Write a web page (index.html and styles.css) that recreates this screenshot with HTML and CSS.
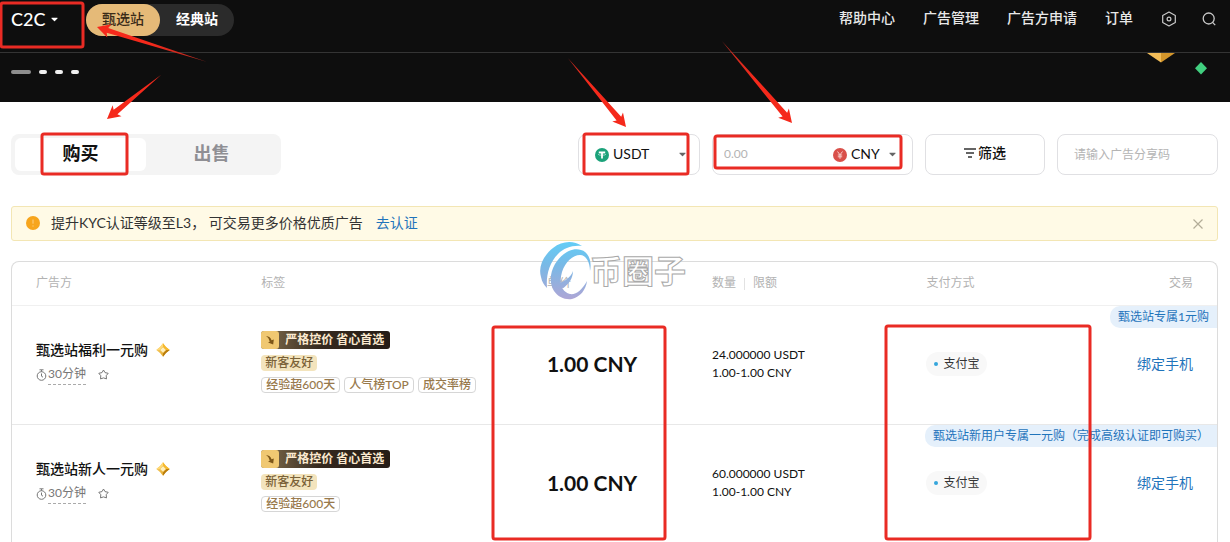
FILE: index.html
```html
<!DOCTYPE html>
<html lang="zh-CN">
<head>
<meta charset="utf-8">
<meta name="viewport" content="width=device-width, initial-scale=1">
<title>C2C</title>
<link rel="stylesheet" href="styles.css">
</head>
<body>
<svg class="defs" width="0" height="0" aria-hidden="true">
  <defs>
    <linearGradient id="gold" x1="0" y1="0" x2="1" y2="1"><stop offset="0" stop-color="#ffd978"/><stop offset="1" stop-color="#d9980f"/></linearGradient>
    <symbol id="caret" viewBox="0 0 8 5"><path d="M1 .5h6c.5 0 .7.5.4.8L4.500 4.200c-.3.3-.7.3-1 0L.6 1.300C.3 1 .5.5 1 .5z" fill="currentColor"/></symbol>
    <symbol id="gem" viewBox="0 0 14 14">
      <path d="M7 .3 10 4 13.700 7 10 10 7 13.700 4 10 .3 7 4 4z" fill="url(#gold)"/>
      <path d="M7 .3 10 4 13.700 7H10.500L7 3.500z" fill="#f7b92c"/>
      <path d="M13.700 7 10 10 7 13.700V10.500L10.500 7z" fill="#b97c0c"/>
      <path d="M7 .3 4 4 .3 7H3.500L7 3.500z" fill="#ffd978"/>
      <path d="M7 4.200 9.800 7 7 9.800 4.200 7z" fill="#fff0bd"/>
    </symbol>
    <symbol id="clock" viewBox="0 0 11 12"><g fill="none" stroke="currentColor"><circle cx="5.500" cy="7" r="4.300"/><path d="M3.500 .8h4M5.500 1v1.700M5.500 4.500V7.200L7 8.200"/></g></symbol>
    <symbol id="star" viewBox="0 0 11 11"><path d="M5.500 1 7 3.600 10.200 4.300 8.200 6.700 8.500 9.900 5.500 8.900 2.500 9.900 2.800 6.700.8 4.300 4 3.600z" fill="none" stroke="currentColor" stroke-linejoin="round"/></symbol>
    <symbol id="down" viewBox="0 0 18 18"><path d="M5 5c3 .3 4.800 1.800 5.500 4.300l2.300-.9-.6 5.200-5.200-2 1.700-.8C8.300 8.500 7.300 6.500 5 5z" fill="#7d5618"/></symbol>
  </defs>
</svg>

<header class="topbar">
  <button class="brand" type="button">C2C <svg class="caret"><use href="#caret"/></svg></button>
  <div class="sites">
    <button class="site site-active" type="button">甄选站</button>
    <button class="site" type="button">经典站</button>
  </div>
  <nav class="nav">
    <a href="#help">帮助中心</a>
    <a href="#manage">广告管理</a>
    <a href="#apply">广告方申请</a>
    <a href="#orders">订单</a>
    <span class="nav-icons">
      <button class="icon-btn" type="button" aria-label="设置"><svg width="16" height="16" viewBox="0 0 16 16" fill="none" stroke="currentColor" stroke-width="1.200"><path d="M8 1 14.300 4.500V11.500L8 15 1.700 11.500V4.500z" stroke-linejoin="round"/><circle cx="8" cy="8" r="1.900"/></svg></button>
      <button class="icon-btn" type="button" aria-label="搜索"><svg width="16" height="16" viewBox="0 0 16 16" fill="none" stroke="currentColor" stroke-width="1.300"><circle cx="7.700" cy="7.500" r="5.500"/><path d="m11.600 11.400 2.600 2.700"/></svg></button>
    </span>
  </nav>
</header>

<section class="banner">
  <div class="dots"><i class="dot dot-active"></i><i class="dot"></i><i class="dot"></i><i class="dot"></i></div>
  <svg class="gems" width="60" height="22" viewBox="0 0 60 22"><path d="M0 0h14v9.500z" fill="#f3bd58"/><path d="M14 0h14L14 9.500z" fill="#d4962b"/><path d="m54 9 6 6.300-6 6.200-6-6.200z" fill="#41cf7f"/></svg>
</section>

<main class="page">
  <div class="filters">
    <div class="trade-tabs">
      <button class="trade-tab trade-tab-active" type="button">购买</button>
      <button class="trade-tab" type="button">出售</button>
    </div>
    <div class="field field-coin">
      <svg class="coin" viewBox="0 0 14 14"><circle cx="7" cy="7" r="7" fill="#1ba27a"/><path d="M3.800 3.400h6.400v1.700H7.900v5.400H6.100V5.100H3.800z" fill="#fff"/><ellipse cx="7" cy="6.400" rx="3.700" ry=".9" fill="none" stroke="#fff" stroke-width=".5"/></svg>
      <select class="pick" aria-label="币种"><option>USDT</option></select>
      <svg class="caret"><use href="#caret"/></svg>
    </div>
    <div class="field field-amount">
      <input class="amount" type="text" placeholder="0.00" aria-label="金额">
      <svg class="coin" viewBox="0 0 14 14"><circle cx="7" cy="7" r="7" fill="#d9504a"/><path d="m4.500 3.500 2.500 3.300 2.500-3.300M7 6.800v4M4.800 7h4.400M4.800 8.800h4.400" fill="none" stroke="#fbd9d6" stroke-width=".9"/></svg>
      <select class="pick pick-fiat" aria-label="法币"><option>CNY</option></select>
      <svg class="caret"><use href="#caret"/></svg>
    </div>
    <button class="field field-filter" type="button"><svg width="12" height="10" viewBox="0 0 12 10" fill="none" stroke="#333" stroke-width="1.300"><path d="M0 1h12M2 5h8M4 9h4"/></svg>筛选</button>
    <input class="field field-code" type="text" placeholder="请输入广告分享码" aria-label="广告分享码">
  </div>

  <div class="notice">
    <svg width="14" height="14" viewBox="0 0 14 14"><circle cx="7" cy="7" r="7" fill="#f7a51c"/><path d="M7 3.500v4.200M7 9.400v1.200" stroke="#ffd083"/></svg>
    <p class="notice-text">提升KYC认证等级至L3， 可交易更多价格优质广告</p>
    <a class="notice-link" href="#kyc">去认证</a>
    <button class="close" type="button" aria-label="关闭"><svg width="10" height="10" viewBox="0 0 10 10"><path d="m.5.5 9 9m0-9-9 9" stroke="#b3ad98" stroke-width="1.200"/></svg></button>
  </div>

  <div class="card">
    <table class="ads">
      <colgroup><col class="c-who"><col class="c-tags"><col class="c-price"><col class="c-amount"><col class="c-pay"><col class="c-act"></colgroup>
      <thead>
        <tr><th>广告方</th><th>标签</th><th>单价</th><th>数量<span class="bar"></span>限额</th><th>支付方式</th><th class="right">交易</th></tr>
      </thead>
      <tbody>
        <tr>
          <td>
            <div class="name">甄选站福利一元购<svg class="gem"><use href="#gem"/></svg></div>
            <div class="meta"><svg class="clock"><use href="#clock"/></svg><span class="time">30分钟</span><svg class="star"><use href="#star"/></svg></div>
          </td>
          <td>
            <div class="tags">
              <span class="promo"><svg class="promo-icon"><use href="#down"/></svg>严格控价 省心首选</span>
              <span class="friendly">新客友好</span>
              <div class="tag-row"><span class="tag">经验超600天</span><span class="tag">人气榜TOP</span><span class="tag">成交率榜</span></div>
            </div>
          </td>
          <td class="price">1.00 CNY</td>
          <td class="limit">24.000000 USDT<br>1.00-1.00 CNY</td>
          <td><span class="pay">支付宝</span></td>
          <td class="right"><span class="ribbon">甄选站专属1元购</span><a class="bind" href="#bind">绑定手机</a></td>
        </tr>
        <tr>
          <td>
            <div class="name">甄选站新人一元购<svg class="gem"><use href="#gem"/></svg></div>
            <div class="meta"><svg class="clock"><use href="#clock"/></svg><span class="time">30分钟</span><svg class="star"><use href="#star"/></svg></div>
          </td>
          <td>
            <div class="tags">
              <span class="promo"><svg class="promo-icon"><use href="#down"/></svg>严格控价 省心首选</span>
              <span class="friendly">新客友好</span>
              <div class="tag-row"><span class="tag">经验超600天</span></div>
            </div>
          </td>
          <td class="price">1.00 CNY</td>
          <td class="limit">60.000000 USDT<br>1.00-1.00 CNY</td>
          <td><span class="pay">支付宝</span></td>
          <td class="right"><span class="ribbon">甄选站新用户专属一元购（完成高级认证即可购买）</span><a class="bind" href="#bind">绑定手机</a></td>
        </tr>
      </tbody>
    </table>
  </div>
</main>

<svg class="marks" width="1230" height="542" viewBox="0 0 1230 542">
  <defs>
    <linearGradient id="wave" gradientUnits="userSpaceOnUse" x1="0" y1="242" x2="0" y2="299"><stop offset="0" stop-color="#63cdf6"/><stop offset=".4" stop-color="#78b9e6"/><stop offset="1" stop-color="#ada6d6"/></linearGradient>
    <linearGradient id="fade" gradientUnits="userSpaceOnUse" x1="0" y1="0" x2="110" y2="0"><stop offset=".5" stop-color="#f5291b"/><stop offset="1" stop-color="#b52a20"/></linearGradient>
  </defs>
  <g class="watermark">
    <path d="M582 246C573 240 562 241 553 248C543 256 538 267 541 277C542 282 544 285 547 288C546 276 549 263 558 254C564 248 572 245 582 246z" fill="url(#wave)"/>
    <path d="M590 271C592 262 589 252 581 250C572 247 561 254 555 264C550 273 549 283 554 291C558 297 565 300 572 299C580 297 586 290 587 281C582 290 576 295 570 294C561 292 559 282 562 272C565 262 573 255 580 255C586 255 590 262 590 271z" fill="url(#wave)"/>
    <path d="M573 271C571 277 565 281 558 284C559 287 561 288 563 288C569 284 573 278 573 271z" fill="url(#wave)"/>
    <text class="mark-text" x="590" y="283">币圈子</text>
  </g>
  <g class="boxes">
    <rect x="1" y="3" width="82" height="44" rx="2"/>
    <rect x="42" y="134" width="85" height="40" rx="2"/>
    <rect x="584" y="134" width="104" height="40" rx="2"/>
    <rect x="715" y="136" width="186" height="32" rx="2"/>
    <rect x="493" y="327" width="172" height="212" rx="2"/>
    <rect x="886" y="326" width="204" height="213" rx="2"/>
  </g>
  <g fill="url(#fade)">
    <path transform="translate(97 27) rotate(17.600)" d="M0 0 13-7 11-2.500 115 0 11 2.500 13 7z"/>
    <path transform="translate(107 119) rotate(-39.200)" d="M0 0 13-7 11-3 70 0 11 3 13 7z"/>
    <path transform="translate(626 127) rotate(-130.100)" d="M0 0 13-7 11-3 90 0 11 3 13 7z"/>
    <path transform="translate(792 123) rotate(-130.500)" d="M0 0 13-7 11-3 108 0 11 3 13 7z"/>
  </g>
</svg>
</body>
</html>
```

FILE: styles.css
```css
* { box-sizing: border-box; }

body {
  margin: 0;
  min-height: 100vh;
  position: relative;
  display: flex;
  flex-direction: column;
  overflow: hidden;
  background: #fff;
  color: #111;
  font: 14px/20px Lato, "Noto Sans CJK SC", sans-serif;
}

button, input, select {
  margin: 0;
  padding: 0;
  border: 0;
  background: none;
  color: inherit;
  font: inherit;
}

a { color: #1f74bb; text-decoration: none; }
svg { flex: none; }
.defs { position: absolute; }
.caret { width: 7px; height: 5px; color: #666; }

.topbar {
  display: flex;
  align-items: flex-start;
  height: 53px;
  padding: 4px 13px 0 11px;
  background: #0e0e0e;
  border-bottom: 1px solid #343434;
  color: #fff;
}

.brand {
  display: flex;
  align-items: center;
  gap: 6px;
  width: 75px;
  height: 30px;
  font-size: 18px;
  font-weight: 500;
}

.brand .caret { color: #fff; }

.sites {
  display: flex;
  height: 32px;
  border-radius: 16px;
  background: #2b2b2b;
}

.site {
  width: 74px;
  padding-bottom: 2px;
  border-radius: 16px;
  font-weight: 700;
}

.site-active {
  background: #e5ba78;
  color: #3a2b18;
  font-weight: 500;
}

.nav {
  display: flex;
  align-items: center;
  gap: 28px;
  height: 28px;
  margin-left: auto;
  font-weight: 500;
}

.nav a { color: #e8e8e8; }
.nav-icons { display: flex; gap: 24px; }

.icon-btn {
  display: flex;
  padding-top: 2px;
  color: #c9c9c9;
}

.banner {
  display: flex;
  justify-content: space-between;
  height: 49px;
  padding: 0 23px 0 11px;
  background: #0e0e0e;
}

.dots {
  display: flex;
  align-items: center;
  gap: 8px;
  height: 38px;
}

.dot {
  width: 8px;
  height: 4px;
  border-radius: 2px;
  background: #f0f0f0;
}

.dot-active { width: 20px; background: #8e8e8e; }

.page {
  flex: 1;
  display: flex;
  flex-direction: column;
  padding: 32px 12px 0 11px;
}

.filters {
  display: flex;
  gap: 12px;
}

.trade-tabs {
  display: flex;
  width: 270px;
  height: 41px;
  margin-right: auto;
  padding: 4px;
  border-radius: 8px;
  background: #f4f4f4;
}

.trade-tab {
  flex: 1;
  padding-bottom: 3px;
  border-radius: 6px;
  color: #8f8f94;
  font-size: 18px;
  font-weight: 700;
}

.trade-tab-active { background: #fff; color: #111; }

.field {
  display: flex;
  align-items: center;
  height: 41px;
  border: 1px solid #e0e0e3;
  border-radius: 8px;
  background: #fff;
}

.field-coin { width: 122px; padding: 0 13px 0 16px; }
.field-amount { width: 201px; padding: 0 16px 0 11px; }
.field-code { width: 161px; padding: 0 16px; font-size: 12px; }

.field-filter {
  justify-content: center;
  gap: 2px;
  width: 120px;
  padding-bottom: 4px;
  font-weight: 500;
}

.coin { width: 14px; height: 14px; margin-right: 4px; }

.pick {
  flex: 1;
  min-width: 0;
  height: 24px;
  padding-bottom: 2px;
  appearance: none;
}

.pick-fiat { flex: 0 0 38px; }

.amount {
  flex: 1;
  min-width: 0;
  padding-bottom: 2px;
  font-size: 12px;
}

::placeholder { color: #b4b4b4; opacity: 1; }

.notice {
  display: flex;
  align-items: center;
  height: 35px;
  margin-top: 31px;
  padding: 0 14px 2px 14px;
  border: 1px solid #f3e6b4;
  border-radius: 3px;
  background: #fffae6;
}

.notice-text { margin: 0 13px 0 11px; color: #333; }
.close { display: flex; margin-left: auto; padding-top: 2px; }

.card {
  flex: 1;
  margin-top: 20px;
  border: 1px solid #dcdcdc;
  border-bottom: 0;
  border-radius: 8px 8px 0 0;
}

.ads {
  width: 100%;
  table-layout: fixed;
  border-collapse: collapse;
}

.c-who { width: 18.7%; }
.c-tags { width: 23.7%; }
.c-price { width: 13.7%; }
.c-amount { width: 17.8%; }
.c-pay { width: 13.1%; }
.c-act { width: 13%; }

th, td {
  padding: 0 0 0 24px;
  text-align: left;
  vertical-align: middle;
}

th {
  height: 43px;
  border-bottom: 1px solid #f0f0f0;
  color: #b2b2b2;
  font-size: 12px;
  font-weight: 400;
}

td {
  position: relative;
  height: 119px;
  padding-bottom: 2px;
  border-bottom: 1px solid #e8e8e8;
  white-space: nowrap;
}

.right { padding-right: 24px; text-align: right; }

.bar {
  display: inline-block;
  height: 12px;
  margin: 0 8px;
  border-left: 1px solid #e2e2e2;
  vertical-align: middle;
}

.name {
  display: flex;
  align-items: center;
  gap: 8px;
  font-weight: 500;
}

.gem { width: 14px; height: 14px; }

.meta {
  display: flex;
  align-items: center;
  margin: 4px 0 2px;
  color: #777;
  line-height: 20px;
}

.clock { width: 11px; height: 12px; margin-right: 1px; }
.time { border-bottom: 1px dashed #aaa; font-size: 12px; }
.star { width: 11px; height: 11px; margin-left: 12px; }

.tags {
  display: flex;
  flex-direction: column;
  align-items: flex-start;
  gap: 6px;
  padding-bottom: 3px;
  font-size: 12px;
  font-weight: 500;
  line-height: 16px;
}

.promo {
  display: flex;
  align-items: center;
  gap: 6px;
  height: 18px;
  padding-right: 6px;
  border-radius: 3px;
  background: linear-gradient(90deg, #85714f, #35291f 45%, #251c16);
  color: #fbe9cf;
  font-weight: 700;
}

.promo-icon {
  width: 18px;
  height: 18px;
  border-radius: 3px;
  background: #f0c872;
}

.friendly {
  padding: 0 4px;
  border-radius: 4px;
  background: #f3e4bd;
  color: #7b6238;
}

.tag-row { display: flex; gap: 4px; }

.tag {
  padding: 0 4px;
  border: 1px solid #d6d6d6;
  border-radius: 4px;
  color: #98794c;
  line-height: 14px;
}

.price { font-size: 21px; font-weight: 700; }
.limit { font-size: 12px; line-height: 18px; }

.pay {
  display: inline-flex;
  align-items: center;
  gap: 5px;
  height: 24px;
  padding: 0 8px;
  border-radius: 12px;
  background: #f8f8f8;
  color: #333;
  font-size: 12px;
}

.pay::before {
  content: "";
  width: 4px;
  height: 4px;
  border-radius: 2px;
  background: #35a6dc;
}

.ribbon {
  position: absolute;
  top: 0;
  right: 0;
  padding: 0 8px;
  border-radius: 10px 0 0 10px;
  background: #e5f0fb;
  color: #1f74bb;
  font-size: 12px;
  line-height: 22px;
}

.marks {
  position: absolute;
  top: 0;
  left: 0;
  pointer-events: none;
}

.boxes { fill: none; stroke: #e92b24; stroke-width: 3px; }

.mark-text {
  fill: #fff;
  fill-opacity: .9;
  stroke: #a9a9a9;
  stroke-width: 1px;
  font-size: 32px;
  font-weight: 700;
}
```
